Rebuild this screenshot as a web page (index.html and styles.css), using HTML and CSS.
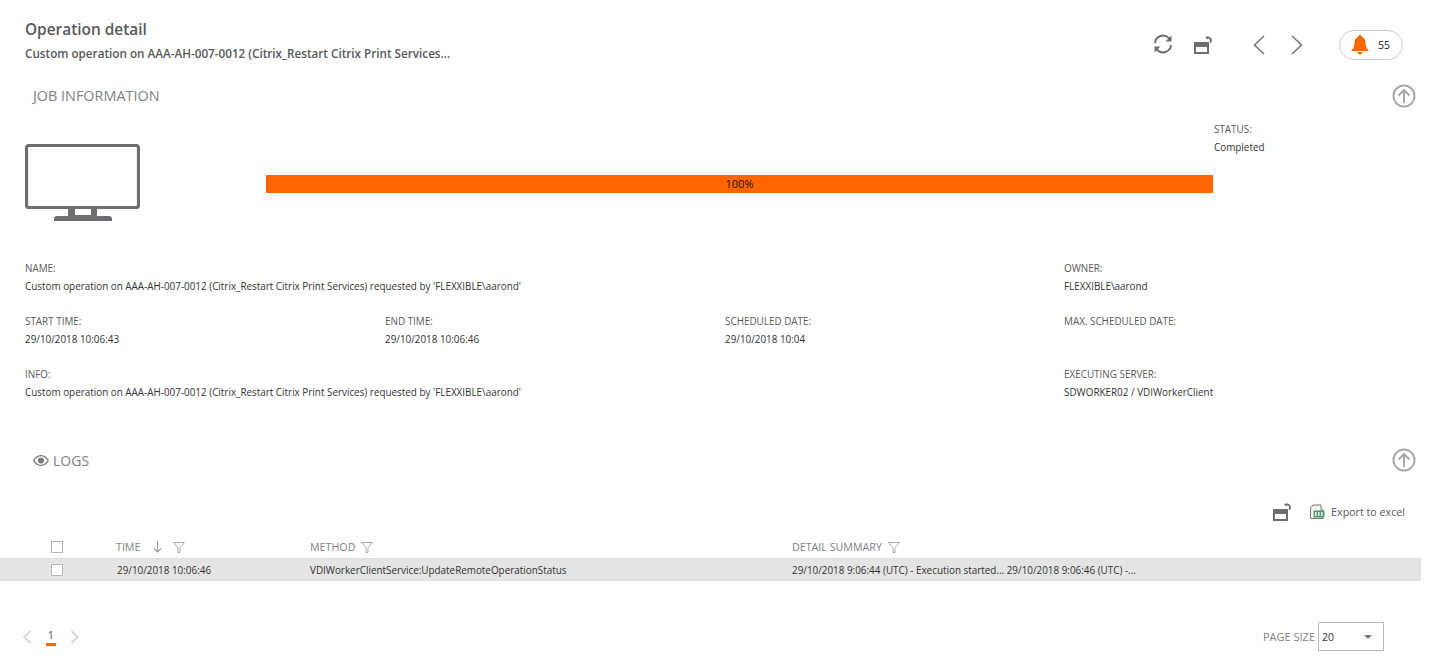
FILE: index.html
```html
<!DOCTYPE html>
<html lang="en">
<head>
    <meta charset="UTF-8">
    <title>Operation detail</title>
    <link rel="stylesheet" href="styles.css">
</head>
<body>
    <header class="page-header">
        <div class="titles">
            <h1>Operation detail</h1>
            <h2>Custom operation on AAA-AH-007-0012 (Citrix_Restart Citrix Print Services...</h2>
        </div>
        <div class="toolbar">
            <svg class="tool-refresh" width="22" height="22" viewBox="0 0 22 22" fill="none" stroke="#6d6e71" stroke-width="2">
                <path d="M3 10a8 8 0 0 1 14-4.600l1.500 1.600"/>
                <path d="M19 12a8 8 0 0 1-14 4.600L3.500 15"/>
                <path d="M19.500 2.500v6h-6z" fill="#6d6e71" stroke="none"/>
                <path d="M2.500 19.500v-6h6z" fill="#6d6e71" stroke="none"/>
            </svg>
            <svg class="tool-layout" width="18" height="18" viewBox="0 0 18 18">
                <path d="M0 6h15v12H0z M2 11v5h11v-5z" fill="#6d6e71" fill-rule="evenodd"/>
                <path d="M13.500 1.300a3.200 3.200 0 0 1 2.600 5.400" fill="none" stroke="#6d6e71" stroke-width="1.800"/>
                <path d="M14 0v3.400L11 1.500z" fill="#6d6e71"/>
            </svg>
            <svg class="tool-prev" width="14" height="22" viewBox="0 0 14 22" fill="none" stroke="#77787b" stroke-width="1.600"><path d="M12 2 2.500 11 12 20"/></svg>
            <svg class="tool-next" width="14" height="22" viewBox="0 0 14 22" fill="none" stroke="#77787b" stroke-width="1.600"><path d="M2 2l9.500 9L2 20"/></svg>
            <div class="alerts">
                <svg width="18" height="20" viewBox="0 0 18 20" fill="#ff6600">
                    <path d="M9 0c1 0 1.600.7 1.600 1.700C13.300 2.500 14.500 5 14.500 8c0 3.500 1 5.500 3 7.200V16H.5v-.8c2-1.700 3-3.700 3-7.200 0-3 1.200-5.500 3.900-6.300C7.400.7 8 0 9 0z"/>
                    <path d="M6.500 17h5a2.500 2.500 0 0 1-5 0z"/>
                </svg>
                <span>55</span>
            </div>
        </div>
    </header>

    <section class="job">
        <div class="section-title">
            <h3>JOB INFORMATION</h3>
            <svg class="collapse" width="24" height="24" viewBox="0 0 24 24" fill="none" stroke="#a7a9ac" stroke-width="2"><circle cx="12" cy="12" r="10.500"/><path d="M12 19V6M6.500 11.500 12 6l5.500 5.500"/></svg>
        </div>

        <div class="progress-row">
            <svg class="monitor" width="115" height="77" viewBox="0 0 115 77">
                <rect x="1.500" y="1.500" width="112" height="62" rx="2.500" fill="none" stroke="#6d6e71" stroke-width="3.200"/>
                <path d="M43 65h7v6h16v-6h6v7H43z" fill="#6d6e71"/>
                <path d="M29 77v-2a3 3 0 0 1 3-3h52a3 3 0 0 1 3 3v2z" fill="#6d6e71"/>
            </svg>
            <div class="progress"><span>100%</span></div>
            <div class="field status">
                <label>STATUS:</label>
                <p>Completed</p>
            </div>
        </div>

        <div class="info-grid">
            <div class="field wide"><label>NAME:</label><p>Custom operation on AAA-AH-007-0012 (Citrix_Restart Citrix Print Services) requested by 'FLEXXIBLE\aarond'</p></div>
            <div class="field"><label>OWNER:</label><p>FLEXXIBLE\aarond</p></div>
            <div class="field"><label>START TIME:</label><p>29/10/2018 10:06:43</p></div>
            <div class="field"><label>END TIME:</label><p>29/10/2018 10:06:46</p></div>
            <div class="field"><label>SCHEDULED DATE:</label><p>29/10/2018 10:04</p></div>
            <div class="field"><label>MAX. SCHEDULED DATE:</label><p></p></div>
            <div class="field wide"><label>INFO:</label><p>Custom operation on AAA-AH-007-0012 (Citrix_Restart Citrix Print Services) requested by 'FLEXXIBLE\aarond'</p></div>
            <div class="field"><label>EXECUTING SERVER:</label><p>SDWORKER02 / VDIWorkerClient</p></div>
        </div>
    </section>

    <section class="logs">
        <div class="section-title">
            <h3>
                <svg width="16" height="11" viewBox="0 0 16 11"><path d="M8 0c3.500 0 6.300 2.300 8 5.500C14.300 8.700 11.500 11 8 11S1.700 8.700 0 5.500C1.700 2.300 4.500 0 8 0zm0 1.200c-2.800 0-5 1.800-6.500 4.300C3 8 5.200 9.800 8 9.800s5-1.800 6.500-4.300C13 3 10.800 1.200 8 1.200z" fill="#77787b"/><circle cx="8" cy="5.500" r="3" fill="#77787b"/></svg>
                LOGS
            </h3>
            <svg class="collapse" width="24" height="24" viewBox="0 0 24 24" fill="none" stroke="#a7a9ac" stroke-width="2"><circle cx="12" cy="12" r="10.500"/><path d="M12 19V6M6.500 11.500 12 6l5.500 5.500"/></svg>
        </div>

        <div class="grid-tools">
            <svg width="18" height="18" viewBox="0 0 18 18">
                <path d="M0 6h15v12H0z M2 11v5h11v-5z" fill="#6d6e71" fill-rule="evenodd"/>
                <path d="M13.500 1.300a3.200 3.200 0 0 1 2.600 5.400" fill="none" stroke="#6d6e71" stroke-width="1.800"/>
                <path d="M14 0v3.400L11 1.500z" fill="#6d6e71"/>
            </svg>
            <a class="export">
                <svg width="16" height="16" viewBox="0 0 16 16">
                    <path d="M4 1h8v5h2v8.500H1.500V4z" fill="#f4f4f4" stroke="#77787b"/>
                    <rect x="4.500" y="6.500" width="11" height="7" fill="#4f9a68"/>
                    <path d="M6 8h1.500v4H6zM9 8h1.500v4H9zM12 8h1.500v4H12z" fill="#e9f3ec"/>
                </svg>
                Export to excel
            </a>
        </div>

        <div class="table-row table-head">
            <span class="cell-check"><i class="check"></i></span>
            <span class="cell-time">TIME
                <svg class="sort" width="9" height="12" viewBox="0 0 9 12" fill="none" stroke="#9b9b9b" stroke-width="1.100"><path d="M4.500 0v11M1 7.500l3.500 3.500L8 7.500"/></svg>
                <svg class="filter" width="12" height="11" viewBox="0 0 12 11" fill="none" stroke="#aaa"><path d="M.5.500h11L7 5.500V10.500H5V5.500z"/></svg>
            </span>
            <span class="cell-method">METHOD
                <svg class="filter" width="12" height="11" viewBox="0 0 12 11" fill="none" stroke="#aaa"><path d="M.5.500h11L7 5.500V10.500H5V5.500z"/></svg>
            </span>
            <span class="cell-detail">DETAIL SUMMARY
                <svg class="filter" width="12" height="11" viewBox="0 0 12 11" fill="none" stroke="#aaa"><path d="M.5.500h11L7 5.500V10.500H5V5.500z"/></svg>
            </span>
        </div>
        <div class="table-row table-data">
            <span class="cell-check"><i class="check"></i></span>
            <span class="cell-time">29/10/2018 10:06:46</span>
            <span class="cell-method">VDIWorkerClientService:UpdateRemoteOperationStatus</span>
            <span class="cell-detail">29/10/2018 9:06:44 (UTC) - Execution started... 29/10/2018 9:06:46 (UTC) -...</span>
        </div>
    </section>

    <footer class="pager">
        <div class="pages">
            <svg width="10" height="14" viewBox="0 0 10 14" fill="none" stroke="#d4d4d4" stroke-width="1.800"><path d="M8.500 1 2 7l6.500 6"/></svg>
            <span class="page-current">1</span>
            <svg width="10" height="14" viewBox="0 0 10 14" fill="none" stroke="#d4d4d4" stroke-width="1.800"><path d="M1.500 1 8 7l-6.500 6"/></svg>
        </div>
        <div class="page-size">
            <span>PAGE SIZE</span>
            <div class="page-select"><span>20</span><i class="caret"></i></div>
        </div>
    </footer>
</body>
</html>
```

FILE: styles.css
```css
* {
    box-sizing: border-box;
}

html, body {
    height: 100%;
}

body {
    margin: 0;
    background: #fff;
    font-family: "Open Sans", Arial, sans-serif;
    font-size: 9.900px;
    color: #333;
    overflow: hidden;
}

.page-header {
    display: flex;
    justify-content: space-between;
    height: 78px;
    padding: 20px 30px 0 25px;
}

h1 {
    margin: 0;
    font-size: 15.400px;
    line-height: 20px;
    font-weight: 600;
    color: #58595b;
}

h2 {
    margin: 4px 0 0;
    font-size: 11.700px;
    line-height: 18px;
    font-weight: 600;
    color: #58595b;
}

.toolbar {
    display: flex;
    align-items: center;
    height: 50px;
}

.tool-refresh {
    margin-bottom: 2px;
}

.tool-layout {
    margin-left: 20px;
}

.tool-prev {
    margin-left: 40px;
}

.tool-next {
    margin-left: 24px;
}

.alerts {
    display: flex;
    align-items: center;
    width: 64px;
    height: 30px;
    margin-left: 35px;
    padding-left: 11px;
    border: 1px solid #ccc;
    border-radius: 15px;
    font-size: 10.500px;
    color: #222;
}

.alerts span {
    margin-left: 9px;
}

.section-title {
    display: flex;
    justify-content: space-between;
    align-items: center;
    height: 36px;
    padding: 0 17px 0 33px;
}

h3 {
    display: flex;
    align-items: center;
    gap: 4px;
    margin: 0 0 2px;
    font-size: 14.400px;
    font-weight: 400;
    color: #808285;
}

.logs h3 {
    margin: 2px 0 0;
    font-size: 14px;
}

.logs .collapse {
    margin-top: 2px;
}

.progress-row {
    display: flex;
    height: 116px;
    padding-left: 25px;
}

.monitor {
    flex: none;
    margin-top: 30px;
}

.progress {
    flex: none;
    width: 947px;
    height: 18px;
    margin: 61px 0 0 126px;
    background: #ff6600;
    text-align: center;
    font-size: 11px;
    line-height: 18px;
    color: #111;
}

.status {
    margin-top: 6px;
    margin-left: 1px;
}

.field label {
    display: block;
    font-size: 9.900px;
    line-height: 18px;
    color: #58595b;
}

.field p {
    min-height: 18px;
    margin: 0;
    font-size: 9.900px;
    line-height: 18px;
    color: #333;
}

.info-grid {
    display: grid;
    grid-template-columns: 360px 340px 339px 1fr;
    row-gap: 17px;
    margin-top: 29px;
    padding-left: 25px;
}

.wide {
    grid-column: span 3;
}

.logs {
    margin-top: 40px;
}

.grid-tools {
    display: flex;
    justify-content: flex-end;
    align-items: center;
    gap: 18px;
    height: 30px;
    margin-top: 20px;
    padding-right: 28px;
}

.export {
    display: flex;
    align-items: center;
    gap: 6px;
    font-size: 10.700px;
    color: #58595b;
}

.table-row {
    display: grid;
    grid-template-columns: 116px 194px 482px 1fr;
    align-items: center;
    width: 1421px;
}

.table-head {
    height: 23px;
    margin-top: 8px;
    font-size: 10.700px;
    color: #808285;
}

.table-data {
    height: 23px;
    background: #e4e4e4;
    border-top: 1px solid #dcdcdc;
    font-size: 9.900px;
    color: #333;
}

.table-data .cell-time {
    padding-left: 1px;
}

.cell-check {
    padding-left: 51px;
    display: flex;
}

.check {
    display: block;
    width: 12px;
    height: 12px;
    background: #fff;
    border: 1px solid #b5b5b5;
}

.sort {
    margin-left: 10px;
    vertical-align: -2px;
}

.filter {
    margin-left: 8px;
    vertical-align: -2px;
}

.cell-method .filter,
.cell-detail .filter {
    margin-left: 3px;
}

.pager {
    display: flex;
    justify-content: space-between;
    align-items: center;
    margin-top: 41px;
    padding: 0 49px 0 22px;
}

.pages {
    display: flex;
    align-items: center;
    gap: 14px;
}

.page-current {
    width: 10px;
    height: 18px;
    border-bottom: 3px solid #ff6600;
    text-align: center;
    font-size: 11px;
    line-height: 13px;
    color: #58595b;
}

.page-size {
    display: flex;
    align-items: center;
    gap: 3px;
    font-size: 11px;
    color: #808285;
}

.page-select {
    display: flex;
    justify-content: space-between;
    align-items: center;
    width: 66px;
    height: 29px;
    padding: 0 11px 0 3px;
    border: 1px solid #bbb;
    color: #333;
    font-size: 10.500px;
}

.caret {
    width: 0;
    height: 0;
    border-left: 4px solid transparent;
    border-right: 4px solid transparent;
    border-top: 4px solid #777;
}
```
